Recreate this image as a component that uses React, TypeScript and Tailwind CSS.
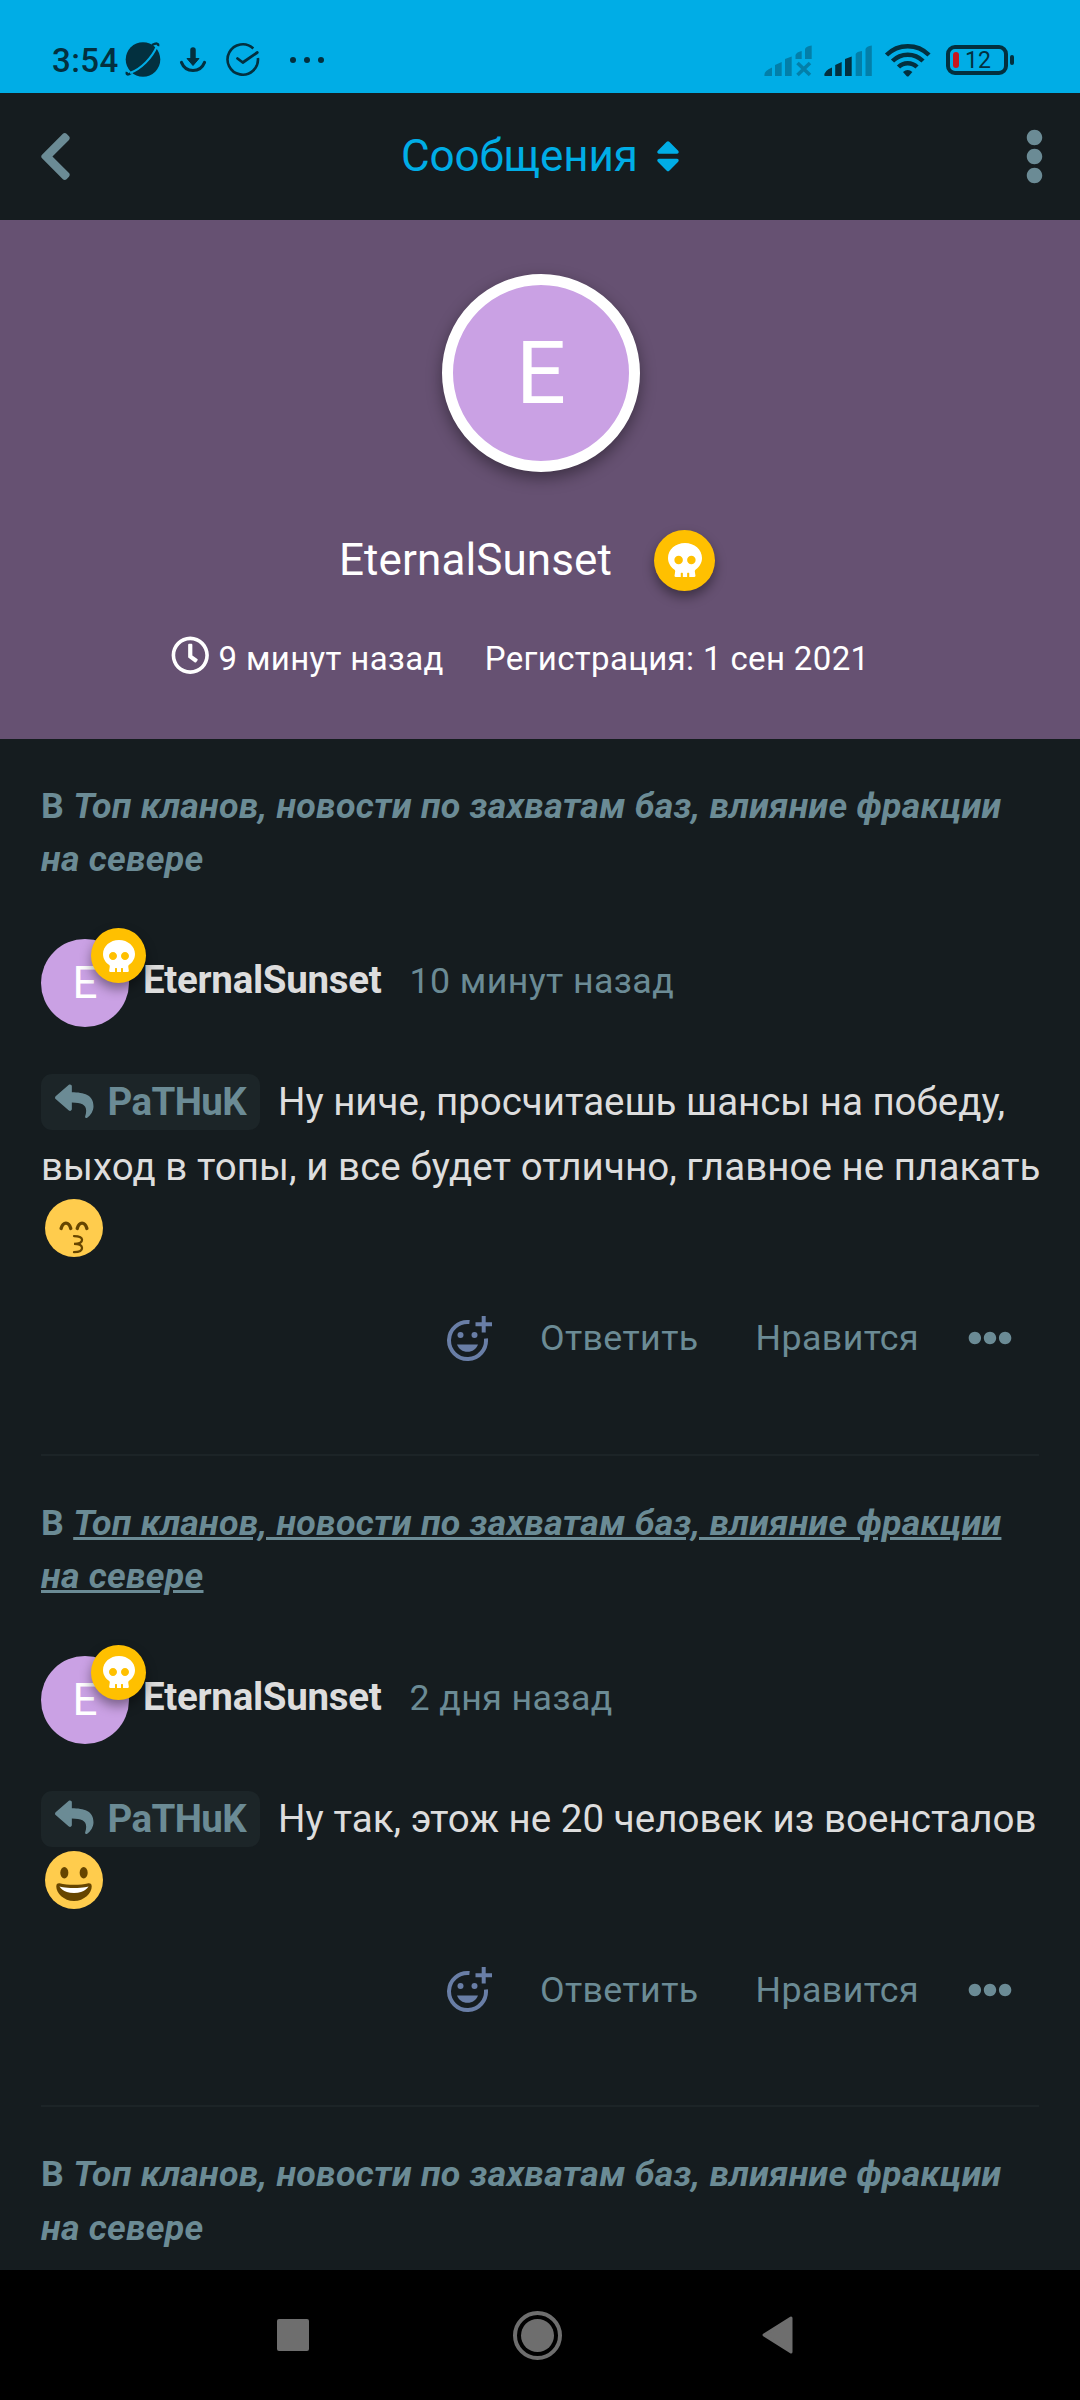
import type { ReactNode } from "react";
import {
  FaChevronLeft,
  FaEllipsisH,
  FaEllipsisV,
  FaRegClock,
  FaReply,
  FaSkull,
  FaSort
} from "react-icons/fa";

interface PostProps {
  time?: string;
  underlined?: boolean;
  text?: ReactNode;
  emoji?: ReactNode;
}

function StatusBar() {
  return (
    <div className="h-[93px] bg-[#00ade6] text-[#03303f] flex pl-[52px] pr-[66px] pt-[40px]">

      <span className="text-[33px] leading-[42px] font-medium tracking-[0.4px] w-[73px] whitespace-nowrap">
        3:54
      </span>

      <svg width="200" height="40" viewBox="125 40 200 40" fill="none">
        <circle cx="143" cy="59.5" r="17.3" fill="#03303f" />
        <path d="M127 72c-1 3 1 3 4 1M152 45c4-2 7-2 6 1" stroke="#03303f" strokeWidth="2.5" />
        <path d="M130 73c11-4 22-15 27-27" stroke="#00ade6" strokeWidth="2" />
        <path d="M193 50v9" stroke="#03303f" strokeWidth="5.5" strokeLinecap="round" />
        <path d="M187 58.5h12l-6 7z" fill="#03303f" stroke="#03303f" strokeLinejoin="round" />
        <path d="M181.500 62.500c2 5 6 8 11.500 8s9.500-3 11.500-8" stroke="#03303f" strokeWidth="3.200" strokeLinecap="round" />
        <path d="M253.300 48.500a15.200 15.200 0 1 0 4.600 9.500" stroke="#03303f" strokeWidth="2.600" />
        <path d="M237.500 58.500l5.300 4 14.500-10" stroke="#03303f" strokeWidth="2.800" strokeLinecap="round" strokeLinejoin="round" />
        <circle cx="293" cy="60" r="3" fill="#03303f" />
        <circle cx="307" cy="60" r="3" fill="#03303f" />
        <circle cx="321" cy="60" r="3" fill="#03303f" />
      </svg>

      <div className="flex ml-auto">
        <svg width="182" height="40" viewBox="764 40 182 40" fill="none">
          <g fill="#037fa9">
            <path d="M764.500 76q-1-5 7.500-8.500V76zM775 76V65l6.700-3v14zM785 76V59l6.700-2.500V76zM795.500 59v-4q1-3 6.200-4v8zM805 59V49q1-3 6.700-3.500V59z" />
            <path d="M797.500 63l12.500 12M810 63l-12.500 12" stroke="#037fa9" strokeWidth="3.600" />
            <path d="M855.700 76V54q1-2.500 6.300-3v25zM865.500 76V49q1-3 6.300-3.500V76z" />
          </g>
          <path d="M824.500 76q-1-5 7.500-8.500V76zM835.200 76V65l6.500-3v14zM845 76V59l6.700-2.500V76z" fill="#03303f" />
          <path d="M886.500 55a30 30 0 0 1 42.500 0M892.500 61a21.500 21.500 0 0 1 30.500 0M898.500 67a13 13 0 0 1 18.500 0" stroke="#03303f" strokeWidth="4.500" />
          <path d="M903 72q4.700-4 9.400 0l-3.500 4q-1.200 1.200-2.400 0z" fill="#03303f" />
        </svg>

        <div className="flex items-center h-[30px] mt-[5px]">
          <div className="w-[62px] h-[30px] border-4 rounded-[9px] border-[#03303f] flex items-center pl-[3px]">
            <span className="w-[6px] h-[16px] rounded-sm bg-[#c8161d]"></span>
            <span className="text-[23px] leading-[22px] ml-[6px] mt-[2px]">12</span>
          </div>
          <span className="w-1 h-[10px] ml-[2px] rounded-xs bg-[#03303f]"></span>
        </div>
      </div>

    </div>
  );
}

function Header() {
  return (
    <div className="h-[127px] grid grid-cols-[1fr_auto_1fr] items-center px-[35px] text-[#6b8b95]">

      <button className="justify-self-start ml-[3px]">
        <FaChevronLeft className="w-[35px] h-[55px]" />
      </button>

      <button className="flex items-center gap-[18px] ml-[1px] text-[#00ade6] text-[44px] tracking-[-0.1px]">
        <span className="-mt-[2px]">Сообщения</span>
        <FaSort className="w-[24px] h-[38.5px]" />
      </button>

      <button className="justify-self-end">
        <FaEllipsisV className="w-[21px] h-[55px]" />
      </button>

    </div>
  );
}

function Hero() {
  return (
    <div className="h-[519px] bg-[#665172] text-white pt-[54px]">

      <div className="w-[198px] h-[198px] ml-[442px] rounded-full border-[11px] border-white bg-[#caa1e4] flex items-center justify-center text-[88px] shadow-[0_6px_16px_rgba(0,0,0,0.4)]">
        E
      </div>

      <div className="flex items-center h-[66px] mt-[55px] pl-[339px]">
        <span className="text-[44px] tracking-[0.1px]">EternalSunset</span>
        <span className="w-[61px] h-[61px] ml-[42px] rounded-full bg-[#ffc000] flex items-center justify-center shadow-[0_6px_12px_rgba(0,0,0,0.4)]">
          <FaSkull className="w-[34px] h-[34px]" />
        </span>
      </div>

      <div className="flex items-center h-[50px] mt-[41px] pl-[171px] text-[33px] tracking-[0.36px]">
        <FaRegClock className="w-[38.5px] h-[38.5px] -mt-[7px]" />
        <span className="ml-[9px]">9 минут назад</span>
        <span className="ml-[41px]">Регистрация: 1 сен 2021</span>
      </div>

    </div>
  );
}

function KissEmoji() {
  return (
    <svg className="w-[58px] h-[58px] ml-[4px]" viewBox="0 0 36 36" fill="none">
      <circle cx="18" cy="18" r="18" fill="#ffcc4d" />
      <g stroke="#664500" strokeLinecap="round">
        <path d="M10 18.300c.4-1.400 1.400-3.300 3-3.300s2.600 1.900 3 3.300M20 18.300c.4-1.400 1.400-3.300 3-3.300s2.600 1.900 3 3.300" strokeWidth="2.100" />
        <path d="M18 23c2.300 0 5 .4 5 2.300S20.300 27.900 18 27.900c2.300 0 5 .6 5 2.500S20.300 33 18 33" strokeWidth="1.400" />
      </g>
    </svg>
  );
}

function GrinEmoji() {
  return (
    <svg className="w-[58px] h-[58px] ml-[4px]" viewBox="0 0 36 36">
      <circle cx="18" cy="18" r="18" fill="#ffcc4d" />
      <ellipse cx="12" cy="13.500" rx="2.500" ry="3.500" fill="#664500" />
      <ellipse cx="24" cy="13.500" rx="2.500" ry="3.500" fill="#664500" />
      <path d="M18 21c-3.600 0-6-.4-9-1-.7-.1-2 0-2 2 0 4 4.600 9 11 9s11-5 11-9c0-2-1.300-2.100-2-2-3 .6-5.400 1-9 1z" fill="#664500" />
      <path d="M9 22s3 1 9 1 9-1 9-1-2 4-9 4-9-4-9-4z" fill="#fff" />
    </svg>
  );
}

function ReactIcon() {
  return (
    <svg width="45" height="45" viewBox="0 0 45 45" fill="none" stroke="#697ea6" strokeWidth="4">
      <path d="M22.500 6.100A18.500 18.500 0 1 0 38.900 22.500" />
      <path d="M36.700 0v16.500M28.500 8.200H45" />
      <g fill="#697ea6" stroke="none">
        <circle cx="13.500" cy="19" r="3" />
        <circle cx="27.500" cy="19" r="3" />
        <path d="M10 28.500h21c-1.600 4.500-5.500 7.300-10.500 7.300S11.600 33 10 28.500z" />
      </g>
    </svg>
  );
}

function Post({ time, underlined, text, emoji }: PostProps) {
  return (
    <article className="pt-[41px]">

      <h3 className="text-[35.75px] leading-[53.3px] tracking-[0.24px] font-bold text-[#6b8b95] whitespace-nowrap">
        В{" "}
        <a className={underlined ? "italic underline" : "italic"}>
          Топ кланов, новости по захватам баз, влияние фракции
          <br />
          на севере
        </a>
      </h3>

      {text && (
        <>
          <div className="flex h-[88px] mt-[52.6px]">
            <div className="relative w-[88px] h-[88px] rounded-full bg-[#caa1e4] flex items-center justify-center text-white text-[44px]">
              E
              <span className="absolute left-[50px] -top-[11px] w-[55px] h-[55px] rounded-full bg-[#ffc000] flex items-center justify-center shadow-[0_6px_12px_rgba(0,0,0,0.4)]">
                <FaSkull className="w-[32px] h-[32px]" />
              </span>
            </div>
            <div className="flex items-baseline ml-[14px] leading-[82px]">
              <span className="text-[38.5px] font-bold tracking-[-0.3px] text-[#ddd]">EternalSunset</span>
              <span className="text-[35.75px] tracking-[0.4px] text-[#6b8b95] ml-[28px]">{time}</span>
            </div>
          </div>

          <div className="mt-[42px] text-[38.5px] leading-[65px] tracking-[0.05px] text-[#ddd] whitespace-nowrap">
            <a className="inline-block h-[56px] leading-[56px] w-[219px] mr-[18px] pl-[14px] rounded-[11px] bg-[#1c2528] text-[#6b8b95] font-bold tracking-[-0.6px]">
              <FaReply className="inline w-[38.5px] h-[38.5px] mr-[14px] align-[-5px]" />
              PaTHuK
            </a>
            {text}
          </div>
          {emoji}

          <div className="flex items-center justify-end h-[44px] mt-[59px] pr-[27px] text-[35.75px] tracking-[0.4px] text-[#6b8b95]">
            <ReactIcon />
            <button className="ml-[48px] mt-[2px]">Ответить</button>
            <button className="ml-[57px] mt-[2px]">Нравится</button>
            <FaEllipsisH className="w-[44px] h-[44px] ml-[49px]" />
          </div>

          <hr className="mt-[93.5px] border-0 h-[2px] bg-[#1c2427]" />
        </>
      )}

    </article>
  );
}

function NavBar() {
  return (
    <div className="h-[130px] bg-black flex items-center pl-[277px]">

      <span className="w-[32px] h-[32px] rounded-[2px] bg-[#6e6e6e]"></span>

      <span className="w-[49px] h-[49px] ml-[204px] rounded-full border-4 border-[#6e6e6e] flex items-center justify-center">
        <span className="w-[33px] h-[33px] rounded-full bg-[#6e6e6e]"></span>
      </span>

      <svg className="ml-[199px]" width="33" height="38" viewBox="0 0 33 38">
        <path d="M3 19L30 2v34z" fill="#6e6e6e" stroke="#6e6e6e" strokeWidth="3" strokeLinejoin="round" />
      </svg>

    </div>
  );
}

export default function App() {
  return (
    <div className="w-[1080px] h-[2400px] overflow-hidden bg-[#151c1f] font-[Roboto,sans-serif]">

      <StatusBar />
      <Header />
      <Hero />

      <main className="h-[1531px] overflow-hidden px-[41px]">
        <Post
          time="10 минут назад"
          text={
            <>
              <span className="tracking-[-0.02px]">Ну ниче, просчитаешь шансы на победу,</span>
              <br />
              выход в топы, и все будет отлично, главное не плакать
            </>
          }
          emoji={<KissEmoji />}
        />
        <Post
          time="2 дня назад"
          underlined
          text="Ну так, этож не 20 человек из военсталов"
          emoji={<GrinEmoji />}
        />
        <Post />
      </main>

      <NavBar />

    </div>
  );
}
